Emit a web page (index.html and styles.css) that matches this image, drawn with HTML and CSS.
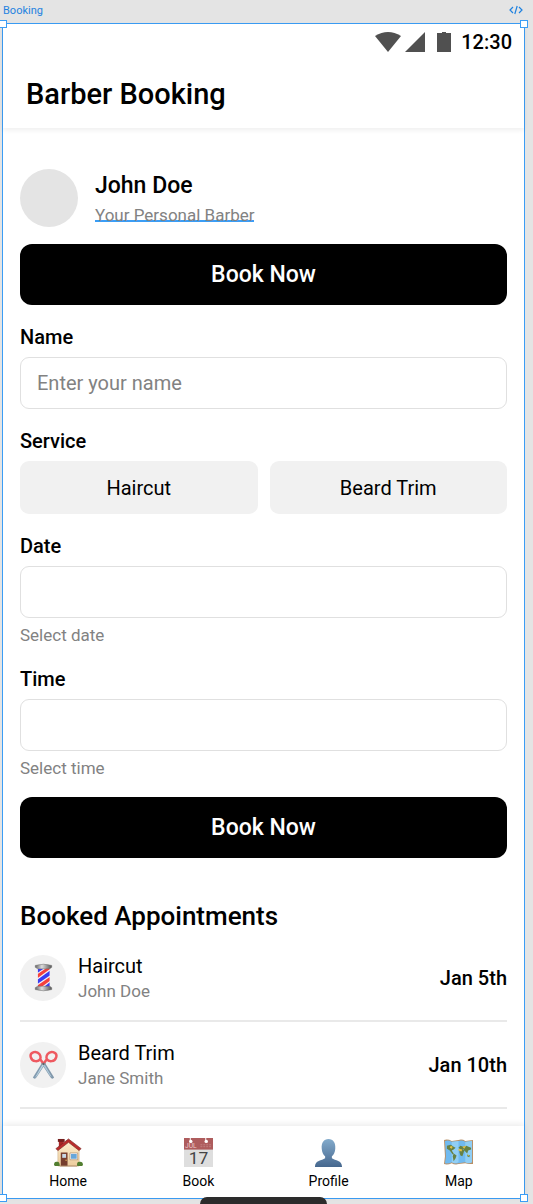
FILE: index.html
```html
<!DOCTYPE html>
<html lang="en">
<head>
<meta charset="utf-8">
<meta name="viewport" content="width=device-width, initial-scale=1">
<title>Barber Booking</title>
<link rel="stylesheet" href="styles.css">
</head>
<body>
<div class="canvas-bar">
  <span>Booking</span>
  <svg class="code-icon" viewBox="0 0 14 10" aria-hidden="true"><path d="M4 2 1 5l3 3M10 2l3 3-3 3M8.200 1 5.800 9"/></svg>
</div>
<div class="frame">
  <i class="handle top left"></i><i class="handle top right"></i>
  <i class="handle bottom left"></i><i class="handle bottom right"></i>

  <header class="header">
    <div class="status">
      <svg class="wifi" viewBox="0 0 26 20" aria-hidden="true"><path d="M0 4Q13-4 26 4L13 20Z"/></svg>
      <svg class="signal" viewBox="0 0 20 20" aria-hidden="true"><path d="M20 0v20H0Z"/></svg>
      <svg class="battery" viewBox="0 0 14 20" aria-hidden="true"><path d="M5 0h4v1h5v19H0V1h5Z"/></svg>
      <time>12:30</time>
    </div>
    <h1>Barber Booking</h1>
  </header>

  <main class="content">
    <section class="profile">
      <div class="avatar"></div>
      <div>
        <h2 class="name">John Doe</h2>
        <p class="role"><a href="#">Your Personal Barber</a></p>
      </div>
    </section>
    <button class="primary" type="button">Book Now</button>

    <form class="form">
      <div class="field">
        <label for="name">Name</label>
        <input id="name" type="text" placeholder="Enter your name">
      </div>
      <div class="field" role="group" aria-labelledby="service">
        <span class="label" id="service">Service</span>
        <div class="options">
          <button type="button">Haircut</button>
          <button type="button">Beard Trim</button>
        </div>
      </div>
      <div class="field">
        <label for="date">Date</label>
        <input id="date" type="text" aria-describedby="date-hint">
        <p class="hint" id="date-hint">Select date</p>
      </div>
      <div class="field">
        <label for="time">Time</label>
        <input id="time" type="text" aria-describedby="time-hint">
        <p class="hint" id="time-hint">Select time</p>
      </div>
      <button class="primary submit" type="button">Book Now</button>
    </form>

    <section>
      <h2 class="section-title">Booked Appointments</h2>
      <ul class="appointments">
        <li>
          <span class="badge">
            <svg viewBox="0 0 30 30" aria-hidden="true">
              <defs>
                <clipPath id="pole"><path d="M9 5h12.500v20H9Z"/></clipPath>
                <linearGradient id="metal"><stop stop-color="#666"/><stop offset=".4" stop-color="#ddd"/><stop offset="1" stop-color="#555"/></linearGradient>
              </defs>
              <path fill="#f4f2f5" d="M9 5h12.500v20H9Z"/>
              <g clip-path="url(#pole)">
                <path fill="#3b3df0" d="M9 6h6L9 10ZM9 17 21.500 8v5L9 21.500ZM15 25l6.500-5v5Z"/>
                <path fill="#f5403c" d="M9 11.500 18.500 5h3v1.500L9 15.500ZM9 23l12.500-8.500v4L12.500 25H9Z"/>
              </g>
              <g fill="url(#metal)" stroke="#666" stroke-width=".5">
                <path d="M6.500 2.500Q15 0 23.500 2.500V4.500L21.500 6H9L6.500 4.500Z"/>
                <path d="M9 24H21.500L23.500 25.500V27.500Q15 30 6.500 27.500V25.500Z"/>
              </g>
            </svg>
          </span>
          <div class="info"><h3>Haircut</h3><p>John Doe</p></div>
          <time>Jan 5th</time>
        </li>
        <li>
          <span class="badge">
            <svg viewBox="0 0 30 30" aria-hidden="true">
              <path fill="#8097aa" d="M12.500 13.500 16 12.500 26 28.500Q24 31 22 28Z"/>
              <path fill="#b0cbdc" d="M13.500 14 15.500 14 23.500 28 22 27Z"/>
              <path fill="#829bb0" d="M17.500 13.500 14 12.500 4 28.500Q6 31 8 28Z"/>
              <path fill="#bdd5e3" d="M16.500 14 14.500 14 6 29 8 27Z"/>
              <g fill="none" stroke="#ee5960" stroke-width="2.500">
                <path d="M14.500 13.500 11.500 9.500Q10 12 6.500 11.500C2 11-1 4 5 2.200C10 1 13 6 11.500 9.500"/>
                <path d="M15.500 13.500 18.500 9.500Q20 12 23.500 11.500C28 11 31 4 25 2.200C20 1 17 6 18.500 9.500"/>
              </g>
              <circle cx="15" cy="14.500" r="1.200" fill="#666"/>
            </svg>
          </span>
          <div class="info"><h3>Beard Trim</h3><p>Jane Smith</p></div>
          <time>Jan 10th</time>
        </li>
      </ul>
    </section>
  </main>

  <nav class="tabs">
    <a href="#">
      <svg viewBox="0 0 30 30" aria-hidden="true">
        <defs><linearGradient id="wall" x2="0" y2="1"><stop stop-color="#fff0d0"/><stop offset="1" stop-color="#eccc9d"/></linearGradient></defs>
        <path fill="#a92727" d="M5 2h5v10H5Z"/><path fill="#75201f" d="M4 1h7v3H4Z"/>
        <path fill="url(#wall)" stroke="#c4a77d" stroke-width=".5" d="M4 12 15 3l11 9v17H4Z"/>
        <path fill="#bb2d2d" stroke="#792420" stroke-width=".7" d="M15 1 28 11 26 13 15 4.500 4 13 2 11Z"/>
        <path fill="#763d2d" d="M7 15h7v14H7Z"/><path fill="#c9d9e6" d="M8.500 16.500h4v4h-4Z"/><circle cx="12.500" cy="23" r=".7" fill="#edbb5b"/>
        <path fill="#fff" stroke="#9a7655" stroke-width=".6" d="M16.500 15.500h8v7h-8Z"/><path fill="#66a6da" d="M17.500 16.500h6v5h-6Z"/>
        <path fill="#527e30" d="M0 28q0-4 3-3.500Q6 24 6 29H1ZM24 29q-1-5 3-4.500 3 0 3 3.500l-1 1Z"/>
        <path stroke="#b28e6c" d="M6 29h18"/>
      </svg>
      <span>Home</span>
    </a>
    <a href="#">
      <svg viewBox="0 0 30 30" aria-hidden="true">
        <path fill="#dedede" d="M0 0h30v30H0Z"/><path fill="#ae5c5d" d="M0 0h30v12H0Z"/>
        <g fill="#fff"><circle cx="7" cy="3.500" r="1.800"/><circle cx="23" cy="3.500" r="1.800"/><path d="M6 0h1v4H6ZM22 0h1v4h-1Z"/></g>
        <text class="month" x="1" y="10.500">JUL</text>
        <path stroke="#c18181" stroke-dasharray="2 1" d="M17 7h11M17 9h11"/>
        <text class="day" x="15" y="27" text-anchor="middle">17</text>
      </svg>
      <span>Book</span>
    </a>
    <a href="#">
      <svg viewBox="0 0 30 30" aria-hidden="true">
        <defs><linearGradient id="person" x2="0" y2="1"><stop stop-color="#83abcc"/><stop offset="1" stop-color="#46678e"/></linearGradient></defs>
        <path fill="url(#person)" d="M15 1C10 1 7.500 5 8 11c.3 4 1.500 6 3.500 8v2C8 23.500 1 23 1 30h28c0-7-7-6.500-10.500-9v-2C20.500 17 21.700 15 22 11c.5-6-2-10-7-10Z"/>
      </svg>
      <span>Profile</span>
    </a>
    <a href="#">
      <svg viewBox="0 0 30 30" aria-hidden="true">
        <path fill="#b88f66" d="M0 2Q4 1 8 3l7-1q4-1 7 1l8-1v17l0 8Q25 27 22 26l-7 1q-4 1-7-1-4 2-8 1l1-8Z"/>
        <path fill="#70baf0" d="M1 3Q5 2 8 4l7-1q4-1 7 1l7-1v16l0 6q-4 2-7 0l-7 1q-4 1-7-1-3 2-7 1l1-7Z"/>
        <path fill="#a1d8f7" d="M8 4 15 3v22q-4 2-7 0ZM22 4l7-1v22q-3 2-7 0Z" opacity=".65"/>
        <path fill="#678144" d="M3 8 7 7l3 2 2 1-2 2-2 1 2 3-1 1-3-4-3-2ZM10 16l3 2-1 3-2 3-1-5ZM15 10l2-2 3 1 3-1 5 2v2l-3 1-1 3-3-3-1-2-3 1ZM16 12l3-1 2 2-1 3-1 3-2-1-1-3ZM24 17l3 1-1 2-2-1Z"/>
        <path fill="#e5c044" d="m7 8 2 1-1 2-2-1ZM15 11l4 1-1 2-3-1ZM19 9l4-1-2 3ZM24 17l2 1-1 1Z"/>
      </svg>
      <span>Map</span>
    </a>
  </nav>
</div>
<div class="toast"></div>
</body>
</html>
```
FILE: styles.css
```css
* { box-sizing: border-box; }
body {
  margin: 0;
  padding: 0 8px 5px 2px;
  position: relative;
  overflow-x: hidden;
  background: #e4e4e4;
  color: #000;
  font-family: Roboto, "Liberation Sans", sans-serif;
}
h1, h2, h3, p, ul { margin: 0; padding: 0; font-weight: 500; }
a { color: inherit; text-decoration: none; }
button, input { font: inherit; color: inherit; }
svg { display: block; }

.canvas-bar {
  display: flex;
  justify-content: space-between;
  align-items: center;
  height: 23px;
  padding: 0 2px 3px 1px;
  color: #1e82e0;
  font-size: 11px;
}
.code-icon { width: 14px; height: 10px; fill: none; stroke: currentColor; stroke-width: 1.2; }

.frame { position: relative; border: 1px solid #3b9df5; background: #fff; }
.handle { position: absolute; z-index: 2; width: 8px; height: 8px; border: 1px solid #3b9df5; background: #fff; }
.top { top: -4px; }
.bottom { bottom: -4px; }
.left { left: -4px; }
.right { right: -4px; }

.header { padding: 6px 12px 16px 23px; box-shadow: 0 2px 5px rgb(0 0 0 / 7%); }
.status { display: flex; justify-content: flex-end; align-items: center; height: 24px; }
.status svg { height: 20px; fill: #505050; }
.status time { margin-left: 10px; font-size: 20px; font-weight: 500; }
.wifi { width: 26px; }
.signal { width: 20px; margin-left: 4px; }
.battery { width: 14px; margin-left: 12px; }
.header h1 { margin-top: 22px; font-size: 29px; line-height: 36px; }

.content { padding: 41px 17px; }
.profile { display: flex; gap: 17px; margin-bottom: 17px; }
.avatar { width: 58px; height: 58px; border-radius: 50%; background: #e4e4e4; }
.name { margin-top: 3px; font-size: 23px; line-height: 28px; }
.role { font-size: 17px; line-height: 20px; margin-top: 2px; color: #828282; font-weight: 400; }
.role a { display: inline-block; height: 20px; line-height: 26px; border-bottom: 2px solid #3b9df5; }

.primary {
  display: block;
  width: 100%;
  height: 61px;
  padding: 0;
  border: 0;
  border-radius: 12px;
  background: #000;
  color: #fff;
  font-size: 23px;
  font-weight: 500;
}
.form { display: flex; flex-direction: column; gap: 20px; margin-top: 20px; }
.field { display: flex; flex-direction: column; }
.field label, .label { margin-bottom: 8px; font-size: 20px; line-height: 24px; font-weight: 500; }
.field input {
  width: 100%;
  height: 52px;
  padding: 0 16px;
  border: 1px solid #e0e0e0;
  border-radius: 9px;
  background: #fff;
  font-size: 20px;
}
.field input::placeholder { color: #828282; opacity: 1; }
.options { display: grid; grid-template-columns: 1fr 1fr; gap: 12px; }
.options button { height: 53px; border: 0; border-radius: 9px; background: #f1f1f1; font-size: 20px; }
.hint { margin-top: 5px; color: #828282; font-size: 17px; line-height: 24px; font-weight: 400; }
.submit { margin-top: -3px; }

.section-title { margin: 41px 0 2px; font-size: 26px; line-height: 34px; }
.appointments { list-style: none; }
.appointments li { display: flex; align-items: center; gap: 12px; height: 87px; border-bottom: 2px solid #e9e9e9; }
.badge { display: grid; place-items: center; width: 46px; height: 46px; border-radius: 50%; background: #f1f1f1; }
.badge svg { width: 29px; height: 29px; }
.info { flex: 1; }
.info h3 { font-size: 20px; line-height: 26px; font-weight: 400; }
.info p { color: #828282; font-size: 17px; line-height: 24px; font-weight: 400; }
.appointments time { font-size: 20px; font-weight: 500; }

.content { padding-bottom: 17px; }
.tabs { display: grid; grid-template-columns: repeat(4, 1fr); height: 72px; box-shadow: 0 -2px 6px rgb(0 0 0 / 8%); }
.tabs a { display: flex; flex-direction: column; align-items: center; gap: 5px; padding-top: 12px; font-size: 14px; line-height: 18px; }
.tabs svg { width: 29px; height: 29px; }
.month { fill: #eccaca; font: 7px Roboto, sans-serif; }
.day { fill: #444; font: 400 18px Roboto, sans-serif; }

.toast { position: absolute; z-index: 3; bottom: 0; left: 200px; width: 127px; height: 7px; border-radius: 12px 12px 0 0; background: #2c2c2c; }
```
